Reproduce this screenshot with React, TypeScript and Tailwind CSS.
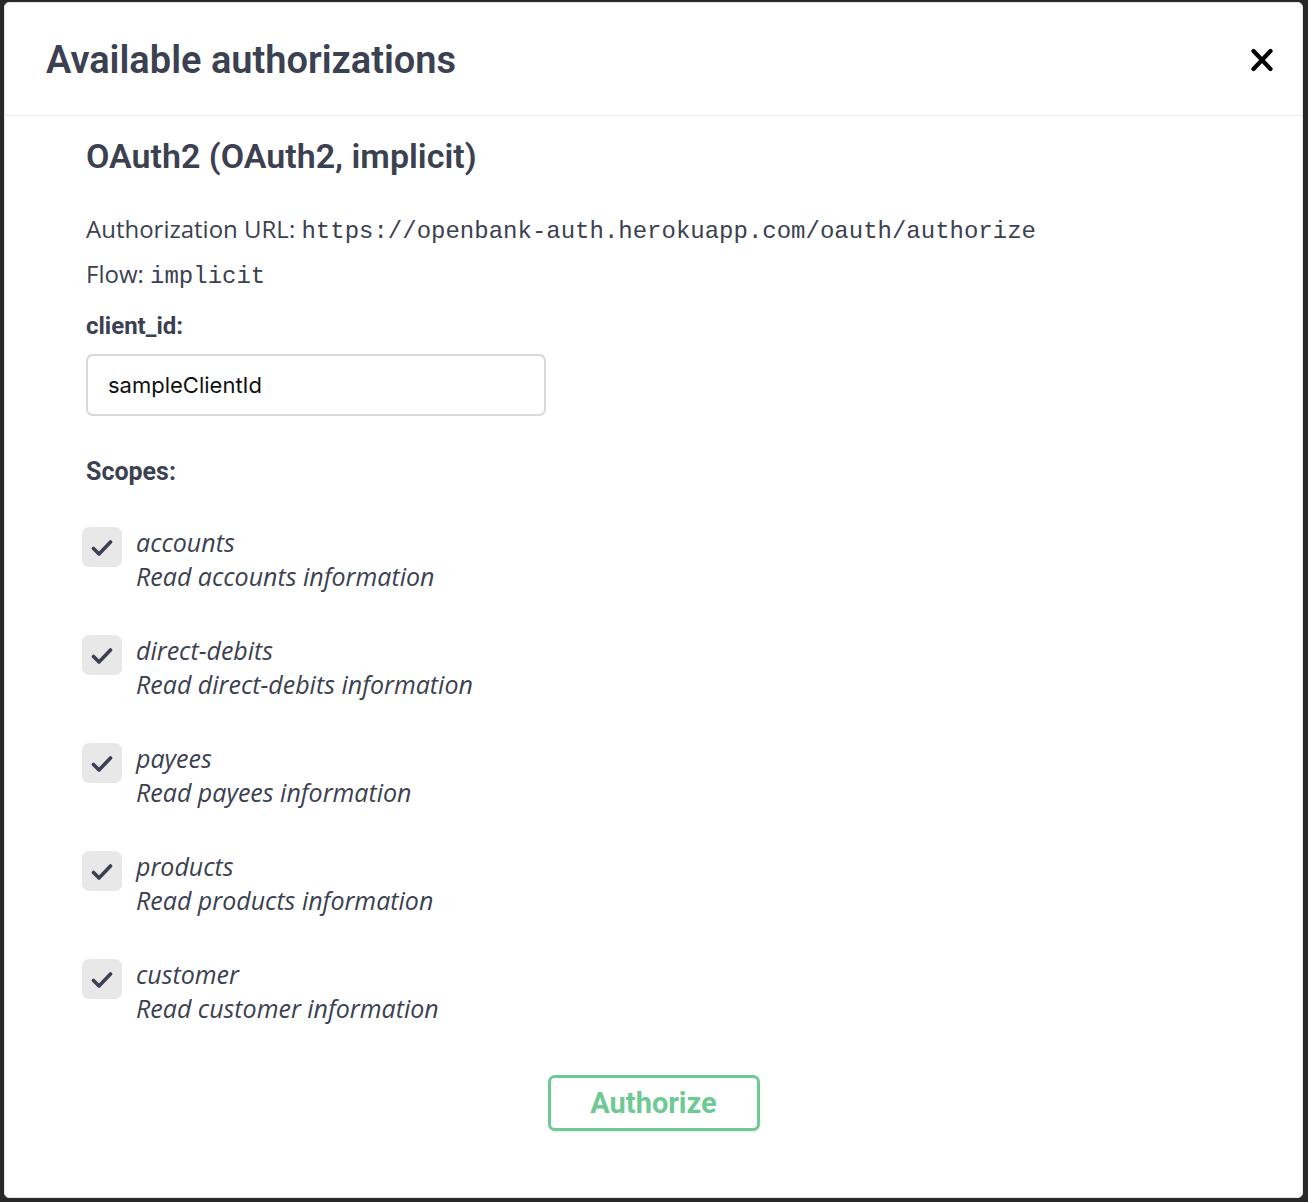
const scopes = [
  { name: 'accounts', desc: 'Read accounts information' },
  { name: 'direct-debits', desc: 'Read direct-debits information' },
  { name: 'payees', desc: 'Read payees information' },
  { name: 'products', desc: 'Read products information' },
  { name: 'customer', desc: 'Read customer information' },
]

const head = "font-['Roboto',sans-serif]"
const body = "font-['Open_Sans',sans-serif]"
const mono = "font-['Liberation_Mono',monospace]"

function Check() {
  return (
    <svg width="22" height="18" viewBox="0 0 22 18" fill="none" className="ml-[-1px] mt-[1px]">
      <path d="M2.5 9.5 L8 15 L19.5 3" stroke="#3b4151" strokeWidth="3.6" strokeLinecap="round" strokeLinejoin="round" />
    </svg>
  )
}

export default function App() {
  return (
    <div className="h-[1202px] bg-[#282828] pt-[2px] pl-[4px] pr-[5px] pb-[4px]">
      <div className="h-full flex flex-col bg-white rounded-[5px] border border-[#e6e6e6] text-[#3b4151]">
        <div className="h-[113px] shrink-0 flex items-center justify-between pl-[41px] pr-[28px] pt-[2px] border-b border-[#ebebeb]">
          <h3 className={`${head} font-semibold text-[38px] leading-none`}>Available authorizations</h3>
          <button className="w-6 h-6 flex items-center justify-center">
            <svg width="24" height="24" viewBox="0 0 24 24" fill="none">
              <path d="M3.5 3 L20.5 21 M20.5 3 L3.5 21" stroke="#000" strokeWidth="4.2" strokeLinecap="round" />
            </svg>
          </button>
        </div>

        <div className="flex flex-col flex-1 pl-[81px] pt-[23px]">
          <h4 className={`${head} font-semibold text-[34px] leading-[34px]`}>OAuth2 (OAuth2, implicit)</h4>

          <p className={`${body} text-[24px] leading-[45px] h-[45px] mt-[33px]`}>
            Authorization URL: <code className={`${mono} text-[24px] leading-none`}>https://openbank-auth.herokuapp.com/oauth/authorize</code>
          </p>
          <p className={`${body} text-[24px] leading-[45px] h-[45px]`}>
            Flow: <code className={`${mono} text-[24px] leading-none`}>implicit</code>
          </p>

          <label className={`${head} font-bold text-[24px] leading-[30px] mt-[15px]`}>client_id:</label>
          <div className="mt-[13px] w-[460px] h-[62px] border-2 border-[#d9d9d9] rounded-[7px] flex items-center pl-[20px]">
            <span className="font-['Inter',sans-serif] text-[22px] text-[#111]">sampleClientId</span>
          </div>

          <h4 className={`${head} font-bold text-[25px] leading-[30px] mt-[41px]`}>Scopes:</h4>

          <div className="flex flex-col gap-[42px] mt-[40px]">
            {scopes.map((s) => (
              <div key={s.name} className="flex items-start ml-[-4px]">
                <div className="w-[40px] h-[40px] shrink-0 rounded-[7px] bg-[#e8e8e8] flex items-center justify-center">
                  <Check />
                </div>
                <div className={`${body} italic text-[25px] leading-[34px] ml-[14px] mt-[-2px]`}>
                  <div>{s.name}</div>
                  <div>{s.desc}</div>
                </div>
              </div>
            ))}
          </div>

          <div className="flex justify-center mt-[50px] ml-[-81px]">
            <button className={`${head} font-bold text-[29px] leading-none w-[212px] h-[56px] rounded-[7px] border-[3px] border-[#6fc994] text-[#6fc994] bg-white shadow-[0_1px_2px_rgba(0,0,0,0.1)]`}>
              Authorize
            </button>
          </div>
        </div>
      </div>
    </div>
  )
}
